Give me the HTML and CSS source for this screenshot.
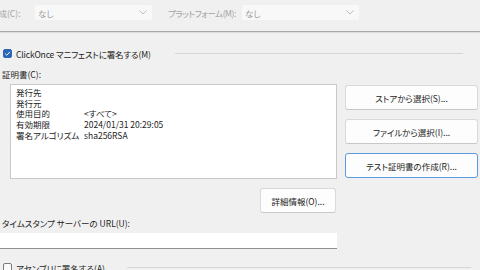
FILE: index.html
```html
<!DOCTYPE html>
<html lang="ja">
<head>
<meta charset="utf-8">
<link rel="stylesheet" href="styles.css">
</head>
<body>
<div class="page">
  <div class="top">
    <span class="dim-label lbl-config">構成(C):</span>
    <div class="combo combo-1"><span>なし</span><svg class="chev" viewBox="0 0 8 5" width="8" height="5"><path d="M0.5 0.5 L4 4 L7.5 0.5" fill="none" stroke="#b5b5b5" stroke-width="0.9"/></svg></div>
    <span class="dim-label lbl-platform">プラットフォーム(M):</span>
    <div class="combo combo-2"><span>なし</span><svg class="chev" viewBox="0 0 8 5" width="8" height="5"><path d="M0.5 0.5 L4 4 L7.5 0.5" fill="none" stroke="#b5b5b5" stroke-width="0.9"/></svg></div>
  </div>
  <div class="sep"></div>

  <div class="check-row first">
    <span class="cb checked"><svg viewBox="0 0 9 9" width="9" height="9"><path d="M2.2 4.7 L3.8 6.2 L6.9 2.9" fill="none" stroke="#ffffff" stroke-width="1"/></svg></span>
    <span class="cb-text tight">ClickOnce マニフェストに署名する(M)</span>
    <span class="rule rule-1"></span>
  </div>

  <div class="label cert-label">証明書(C):</div>

  <div class="cert-grid">
    <div class="left-col">
      <div class="listbox">
        <div class="row"><span class="k">発行先</span><span class="v"></span></div>
        <div class="row"><span class="k">発行元</span><span class="v"></span></div>
        <div class="row"><span class="k">使用目的</span><span class="v">&lt;すべて&gt;</span></div>
        <div class="row"><span class="k">有効期限</span><span class="v">2024/01/31 20:29:05</span></div>
        <div class="row"><span class="k">署名アルゴリズム</span><span class="v">sha256RSA</span></div>
      </div>
      <button class="btn details">詳細情報(O)...</button>
    </div>
    <div class="right-col">
      <button class="btn side">ストアから選択(S)...</button>
      <button class="btn side">ファイルから選択(I)...</button>
      <button class="btn side focus">テスト証明書の作成(R)...</button>
    </div>
  </div>

  <div class="label ts-label">タイムスタンプ サーバーの URL(U):</div>
  <div class="ts-input"></div>

  <div class="check-row last">
    <span class="cb"></span>
    <span class="cb-text">アセンブリに署名する(A)</span>
    <span class="rule rule-2"></span>
  </div>
</div>
</body>
</html>
```

FILE: styles.css
```css
html, body {
  margin: 0;
  padding: 0;
  background: #f0f0f0;
  overflow: hidden;
}
body {
  width: 480px;
  height: 270px;
  font-family: "Noto Sans CJK JP", "Noto Sans", sans-serif;
  font-size: 8.5px;
  font-feature-settings: "palt";
  color: #1c1c1c;
}
.page {
  display: flex;
  flex-direction: column;
}
.top {
  display: flex;
  align-items: center;
  height: 15px;
  margin-top: 5px;
  margin-left: -10px;
}
.dim-label {
  color: #a3a3a3;
  white-space: nowrap;
}
.lbl-config {
  width: 45px;
}
.combo {
  height: 15px;
  background: #f8f8f8;
  color: #9c9c9c;
  display: flex;
  align-items: center;
  justify-content: space-between;
  padding: 0 5px 0 3px;
  box-sizing: border-box;
  border-radius: 2px;
}
.combo-1 {
  width: 117px;
}
.lbl-platform {
  margin-left: 16px;
  width: 74px;
  letter-spacing: -0.45px;
}
.combo-2 {
  width: 117px;
}
.sep {
  margin-top: 11px;
  height: 0;
  border-top: 1px solid #a8a8a8;
  border-bottom: 1px solid #dcdcdc;
}
.check-row {
  display: flex;
  align-items: center;
  height: 11px;
  padding-left: 3px;
}
.check-row.first {
  margin-top: 15px;
}
.cb {
  width: 9px;
  height: 9px;
  box-sizing: border-box;
  border: 1px solid #7a7a7a;
  border-radius: 2px;
  background: #fafafa;
  display: flex;
  flex: none;
}
.cb.checked {
  background: #2a67b8;
  border-color: #2a67b8;
}
.cb.checked svg {
  margin: -1px;
}
.cb-text {
  margin-left: 4px;
  white-space: nowrap;
}
.cb-text.tight {
  letter-spacing: -0.15px;
}
.rule {
  height: 1px;
  background: #d6d6d6;
}
.rule-1 {
  margin-left: 24px;
  width: 288px;
}
.rule-2 {
  margin-left: 22px;
  width: 344px;
}
.label {
  height: 12px;
  line-height: 12px;
  padding-left: 2px;
  white-space: nowrap;
}
.cert-label {
  margin-top: 9px;
}
.cert-grid {
  margin-top: 4px;
  display: grid;
  grid-template-columns: 337px 133px;
  column-gap: 8px;
}
.left-col {
  display: flex;
  flex-direction: column;
}
.listbox {
  margin-left: 10px;
  height: 95px;
  box-sizing: border-box;
  border: 1px solid #c9c9c9;
  background: #ffffff;
  padding: 2px 0 0 5px;
}
.row {
  display: flex;
  height: 10.7px;
  line-height: 10.7px;
  white-space: nowrap;
}
.k {
  width: 68px;
}
.btn {
  font: inherit;
  font-feature-settings: "palt";
  color: #1c1c1c;
  background: #fdfdfd;
  border: 1px solid #d9d9d9;
  border-bottom-color: #c8c8c8;
  border-radius: 3px;
  padding: 0;
  height: 25px;
  box-sizing: border-box;
  white-space: nowrap;
}
.details {
  align-self: flex-end;
  width: 76px;
  margin-top: 9px;
  margin-right: 1px;
}
.right-col {
  display: flex;
  flex-direction: column;
  gap: 9px;
  padding-top: 1px;
}
.side {
  width: 133px;
}
.side.focus {
  border: 1px solid #5b9ae0;
}
.ts-label {
  margin-top: 4px;
}
.ts-input {
  margin-top: 4px;
  width: 337px;
  height: 16px;
  box-sizing: border-box;
  background: #ffffff;
  border-bottom: 1px solid #8f8f8f;
}
.check-row.last {
  margin-top: 13px;
}
```
